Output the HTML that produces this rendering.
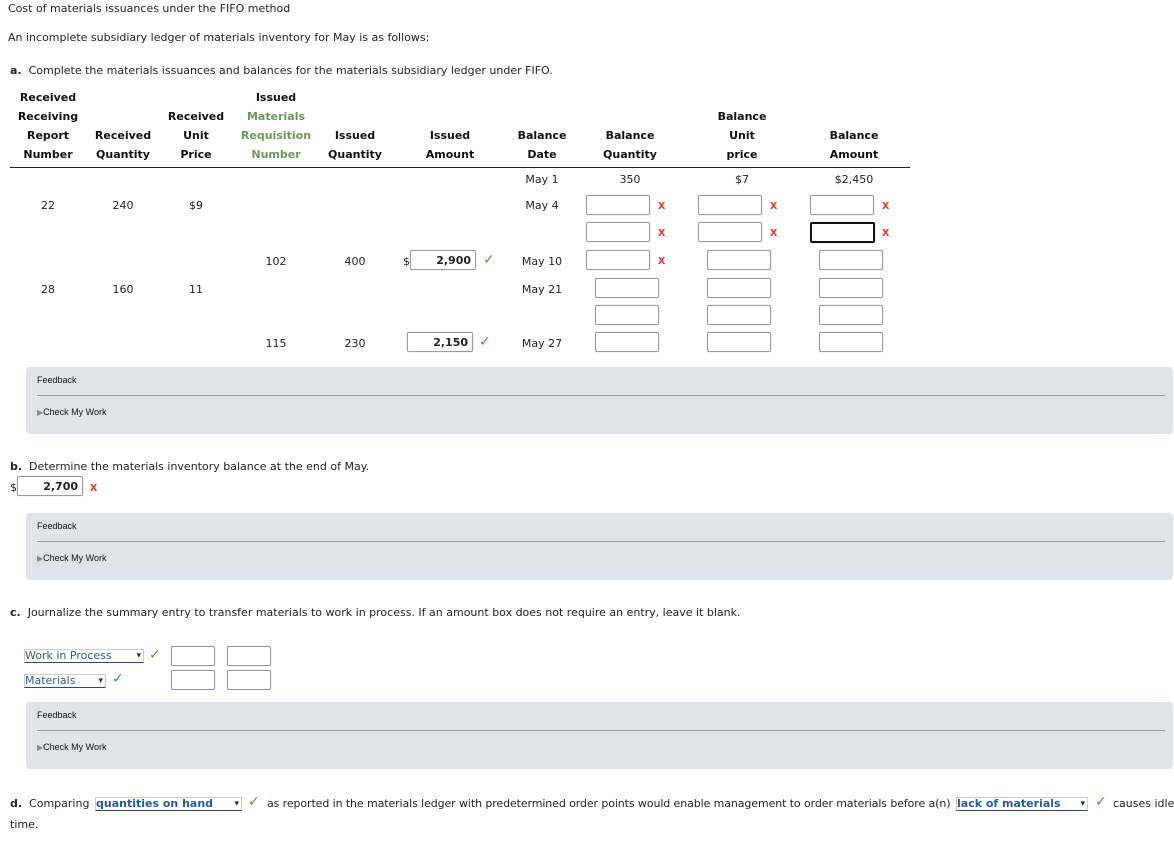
<!DOCTYPE html>
<html><head><meta charset="utf-8"><style>
body{margin:0;width:1174px;height:844px;background:#fff;font-family:"DejaVu Sans","Liberation Sans",sans-serif;font-size:11px;color:#222;position:relative;overflow:hidden}
.t{position:absolute;white-space:nowrap;line-height:14px;margin-top:1px}
.c{position:absolute;width:120px;text-align:center;white-space:nowrap;line-height:14px;margin-top:1px}
.b{font-weight:bold;color:#111}
.g{color:#6a9a5a}
.in{position:absolute;width:62px;height:18px;border:1px solid #999;border-radius:2px;box-shadow:0 0 1px #bbb;background:#fff;font-weight:bold;text-align:right;line-height:18px;padding-right:0;box-sizing:content-box}
.x{position:absolute;color:#e8312b;font-weight:bold;font-size:13px;line-height:14px;font-family:"Liberation Sans",sans-serif}
.ok{position:absolute;color:#4a9a3a;font-weight:bold;font-size:14px;line-height:14px}
.fb{position:absolute;left:26px;width:1147px;height:67px;background:#dfe4e8;border-radius:4px;font-family:"Liberation Sans",Arial,sans-serif;font-size:9px;color:#111}
.fb .l1{position:absolute;left:11px;top:8px}
.fb .hr{position:absolute;left:11px;right:8px;top:28px;border-top:1px solid #999}
.fb .l2{position:absolute;left:11px;top:40px}
.fb .tri{color:#888;font-size:8px}
.sel{position:absolute;border-bottom:1px solid #2a4a7a;border-top:1px solid #ccc;border-left:1px solid #ccc;border-right:1px solid #ccc;color:#2a5a9a;line-height:12px;height:12px}
.sel:after{content:"▾";position:absolute;right:2px;top:0;color:#333;font-size:9px}
</style></head><body>
<div class="t" style="left:8px;top:1px">Cost of materials issuances under the FIFO method</div>
<div class="t" style="left:8px;top:30px">An incomplete subsidiary ledger of materials inventory for May is as follows:</div>
<div class="t" style="left:10px;top:63px"><b>a.</b>&nbsp; Complete the materials issuances and balances for the materials subsidiary ledger under FIFO.</div>

<div class="c b" style="left:-12px;top:90px">Received</div>
<div class="c b" style="left:-12px;top:109px">Receiving</div>
<div class="c b" style="left:-12px;top:128px">Report</div>
<div class="c b" style="left:-12px;top:147px">Number</div>
<div class="c b" style="left:63px;top:128px">Received</div>
<div class="c b" style="left:63px;top:147px">Quantity</div>
<div class="c b" style="left:136px;top:109px">Received</div>
<div class="c b" style="left:136px;top:128px">Unit</div>
<div class="c b" style="left:136px;top:147px">Price</div>
<div class="c b" style="left:216px;top:90px">Issued</div>
<div class="c b g" style="left:216px;top:109px">Materials</div>
<div class="c b g" style="left:216px;top:128px">Requisition</div>
<div class="c b g" style="left:216px;top:147px">Number</div>
<div class="c b" style="left:295px;top:128px">Issued</div>
<div class="c b" style="left:295px;top:147px">Quantity</div>
<div class="c b" style="left:390px;top:128px">Issued</div>
<div class="c b" style="left:390px;top:147px">Amount</div>
<div class="c b" style="left:482px;top:128px">Balance</div>
<div class="c b" style="left:482px;top:147px">Date</div>
<div class="c b" style="left:570px;top:128px">Balance</div>
<div class="c b" style="left:570px;top:147px">Quantity</div>
<div class="c b" style="left:682px;top:109px">Balance</div>
<div class="c b" style="left:682px;top:128px">Unit</div>
<div class="c b" style="left:682px;top:147px">price</div>
<div class="c b" style="left:794px;top:128px">Balance</div>
<div class="c b" style="left:794px;top:147px">Amount</div>
<div style="position:absolute;left:10px;top:167px;width:900px;border-top:1px solid #222"></div>

<div class="c" style="left:482px;top:172px">May 1</div>
<div class="c" style="left:570px;top:172px">350</div>
<div class="c" style="left:682px;top:172px">$7</div>
<div class="c" style="left:794px;top:172px">$2,450</div>

<div class="c" style="left:-12px;top:198px">22</div>
<div class="c" style="left:63px;top:198px">240</div>
<div class="c" style="left:136px;top:198px">$9</div>
<div class="c" style="left:482px;top:198px">May 4</div>
<div class="in" style="left:586px;top:195px"></div><div class="x" style="left:658px;top:198px">x</div>
<div class="in" style="left:698px;top:195px"></div><div class="x" style="left:770px;top:198px">x</div>
<div class="in" style="left:810px;top:195px"></div><div class="x" style="left:882px;top:198px">x</div>

<div class="in" style="left:586px;top:222px"></div><div class="x" style="left:658px;top:225px">x</div>
<div class="in" style="left:698px;top:222px"></div><div class="x" style="left:770px;top:225px">x</div>
<div class="in" style="left:810px;top:222px;border:2px solid #111;width:61px;height:17px"></div><div class="x" style="left:882px;top:225px">x</div>

<div class="c" style="left:216px;top:254px">102</div>
<div class="c" style="left:295px;top:254px">400</div>
<div class="t" style="left:403px;top:254px">$</div>
<div class="in" style="left:410px;top:250px;line-height:20px;padding-right:4px;width:60px">2,900</div><div class="ok" style="left:483px;top:253px">✓</div>
<div class="c" style="left:482px;top:254px">May 10</div>
<div class="in" style="left:586px;top:250px"></div><div class="x" style="left:658px;top:253px">x</div>
<div class="in" style="left:707px;top:250px"></div>
<div class="in" style="left:819px;top:250px"></div>

<div class="c" style="left:-12px;top:282px">28</div>
<div class="c" style="left:63px;top:282px">160</div>
<div class="c" style="left:136px;top:282px">11</div>
<div class="c" style="left:482px;top:282px">May 21</div>
<div class="in" style="left:595px;top:278px"></div>
<div class="in" style="left:707px;top:278px"></div>
<div class="in" style="left:819px;top:278px"></div>

<div class="in" style="left:595px;top:305px"></div>
<div class="in" style="left:707px;top:305px"></div>
<div class="in" style="left:819px;top:305px"></div>

<div class="c" style="left:216px;top:336px">115</div>
<div class="c" style="left:295px;top:336px">230</div>
<div class="in" style="left:407px;top:332px;line-height:20px;padding-right:4px;width:60px">2,150</div><div class="ok" style="left:479px;top:335px">✓</div>
<div class="c" style="left:482px;top:336px">May 27</div>
<div class="in" style="left:595px;top:332px"></div>
<div class="in" style="left:707px;top:332px"></div>
<div class="in" style="left:819px;top:332px"></div>

<div class="fb" style="top:367px"><div class="l1">Feedback</div><div class="hr"></div><div class="l2"><span class="tri">▶</span>Check My Work</div></div>

<div class="t" style="left:10px;top:459px"><b>b.</b>&nbsp; Determine the materials inventory balance at the end of May.</div>
<div class="t" style="left:10px;top:480px">$</div>
<div class="in" style="left:17px;top:476px;line-height:20px;padding-right:4px;width:60px">2,700</div><div class="x" style="left:90px;top:480px">x</div>

<div class="fb" style="top:513px"><div class="l1">Feedback</div><div class="hr"></div><div class="l2"><span class="tri">▶</span>Check My Work</div></div>

<div class="t" style="left:10px;top:605px"><b>c.</b>&nbsp; Journalize the summary entry to transfer materials to work in process. If an amount box does not require an entry, leave it blank.</div>
<div class="sel" style="left:24px;top:649px;width:118px">Work in Process</div><div class="ok" style="left:149px;top:648px">✓</div>
<div class="in" style="left:171px;top:646px;width:42px"></div><div class="in" style="left:227px;top:646px;width:42px"></div>
<div class="sel" style="left:24px;top:674px;width:80px">Materials</div><div class="ok" style="left:112px;top:672px">✓</div>
<div class="in" style="left:171px;top:670px;width:42px"></div><div class="in" style="left:227px;top:670px;width:42px"></div>

<div class="fb" style="top:702px"><div class="l1">Feedback</div><div class="hr"></div><div class="l2"><span class="tri">▶</span>Check My Work</div></div>

<div class="t" style="left:10px;top:796px"><b>d.</b>&nbsp; Comparing</div>
<div class="sel b" style="left:95px;top:797px;width:145px;color:#2a5a9a">quantities on hand</div><div class="ok" style="left:248px;top:795px">✓</div>
<div class="t" style="left:267px;top:796px;letter-spacing:-0.1px">as reported in the materials ledger with predetermined order points would enable management to order materials before a(n)</div>
<div class="sel b" style="left:956px;top:797px;width:130px;color:#2a5a9a">lack of materials</div><div class="ok" style="left:1095px;top:795px">✓</div>
<div class="t" style="left:1113px;top:796px">causes idle</div>
<div class="t" style="left:10px;top:817px">time.</div>
</body></html>
